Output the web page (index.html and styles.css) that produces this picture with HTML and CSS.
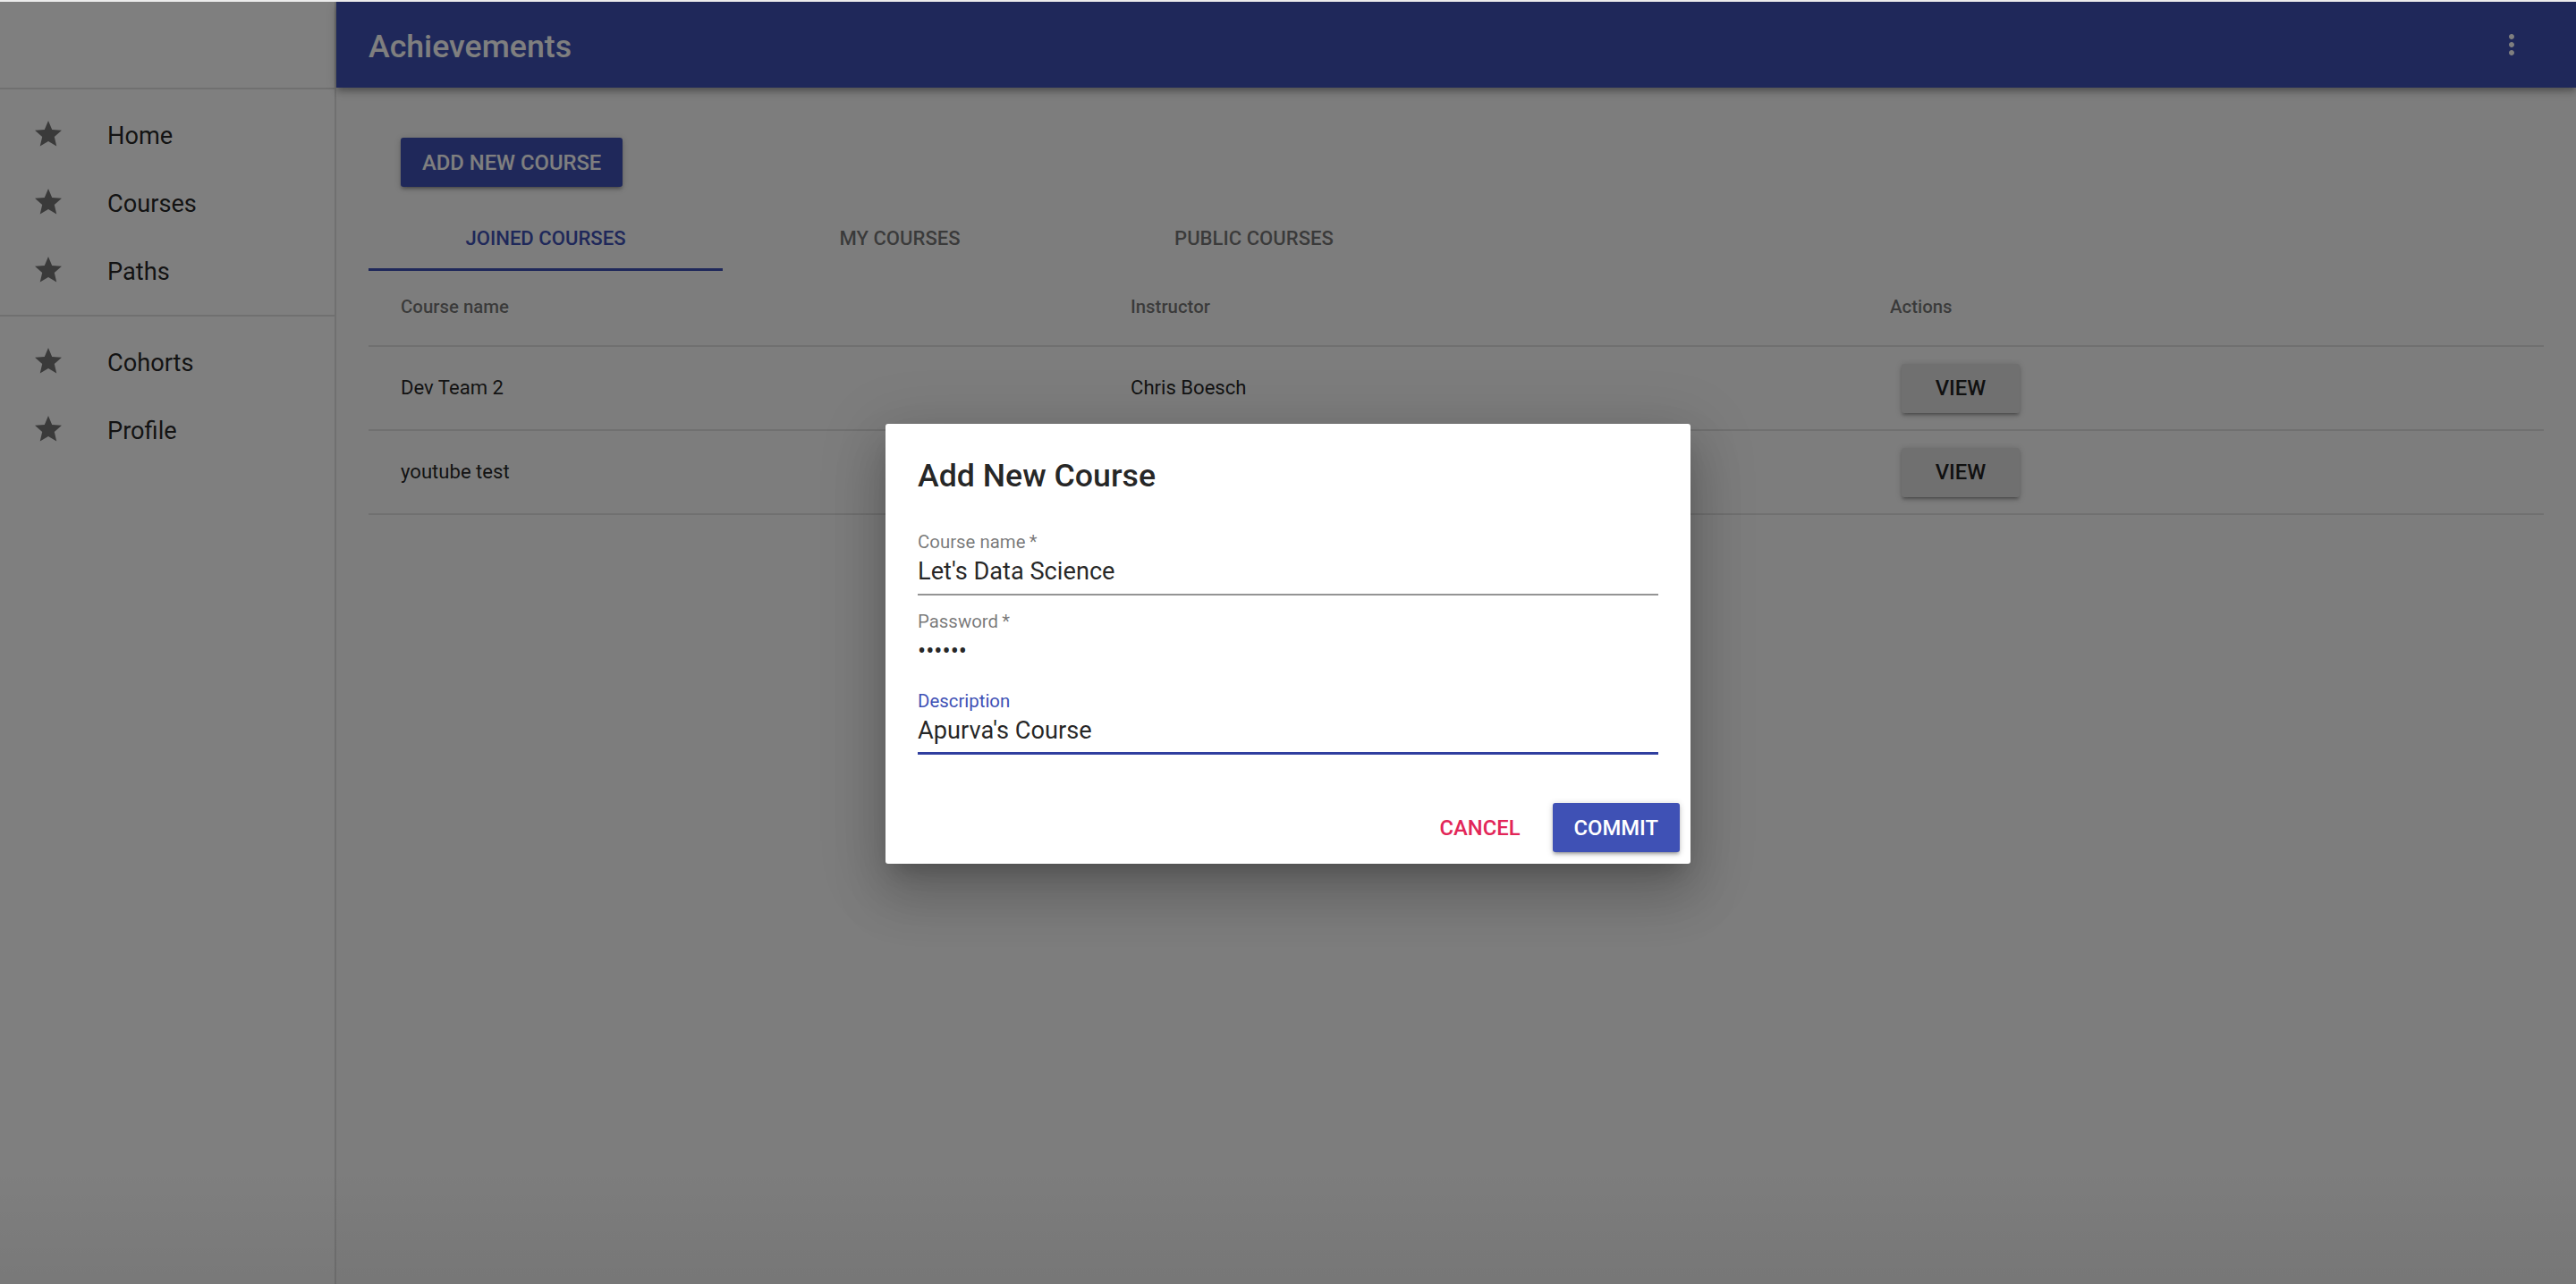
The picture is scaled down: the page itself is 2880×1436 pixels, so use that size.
FILE: index.html
```html
<!DOCTYPE html>
<html lang="en">
<head>
<meta charset="utf-8">
<title>Achievements</title>
<link rel="stylesheet" href="styles.css">
</head>
<body>
<div class="screen">
  <aside class="drawer">
    <div class="drawer-head"></div>
    <hr class="divider">
    <ul class="nav">
      <li class="nav-item"><svg class="nav-icon" viewBox="0 0 24 24"><path d="M12 17.27L18.18 21l-1.64-7.03L22 9.24l-7.19-.61L12 2 9.19 8.63 2 9.24l5.46 4.73L5.82 21z"/></svg><span class="nav-text">Home</span></li>
      <li class="nav-item"><svg class="nav-icon" viewBox="0 0 24 24"><path d="M12 17.27L18.18 21l-1.64-7.03L22 9.24l-7.19-.61L12 2 9.19 8.63 2 9.24l5.46 4.73L5.82 21z"/></svg><span class="nav-text">Courses</span></li>
      <li class="nav-item"><svg class="nav-icon" viewBox="0 0 24 24"><path d="M12 17.27L18.18 21l-1.64-7.03L22 9.24l-7.19-.61L12 2 9.19 8.63 2 9.24l5.46 4.73L5.82 21z"/></svg><span class="nav-text">Paths</span></li>
    </ul>
    <hr class="divider">
    <ul class="nav">
      <li class="nav-item"><svg class="nav-icon" viewBox="0 0 24 24"><path d="M12 17.27L18.18 21l-1.64-7.03L22 9.24l-7.19-.61L12 2 9.19 8.63 2 9.24l5.46 4.73L5.82 21z"/></svg><span class="nav-text">Cohorts</span></li>
      <li class="nav-item"><svg class="nav-icon" viewBox="0 0 24 24"><path d="M12 17.27L18.18 21l-1.64-7.03L22 9.24l-7.19-.61L12 2 9.19 8.63 2 9.24l5.46 4.73L5.82 21z"/></svg><span class="nav-text">Profile</span></li>
    </ul>
  </aside>

  <div class="main">
    <header class="appbar">
      <h1 class="appbar-title">Achievements</h1>
      <button class="icon-btn" aria-label="More options"><svg viewBox="0 0 24 24"><path d="M12 8c1.1 0 2-.9 2-2s-.9-2-2-2-2 .9-2 2 .9 2 2 2zm0 2c-1.1 0-2 .9-2 2s.9 2 2 2 2-.9 2-2-.9-2-2-2zm0 6c-1.1 0-2 .9-2 2s.9 2 2 2 2-.9 2-2-.9-2-2-2z"/></svg></button>
    </header>

    <main class="content">
      <div class="actions-bar">
        <button class="btn btn-contained btn-primary">ADD NEW COURSE</button>
      </div>

      <nav class="tabs">
        <button class="tab tab-active">JOINED COURSES</button>
        <button class="tab">MY COURSES</button>
        <button class="tab">PUBLIC COURSES</button>
      </nav>

      <table class="table">
        <thead>
          <tr>
            <th class="col-name">Course name</th>
            <th class="col-instructor">Instructor</th>
            <th>Actions</th>
          </tr>
        </thead>
        <tbody>
          <tr>
            <td>Dev Team 2</td>
            <td>Chris Boesch</td>
            <td class="cell-actions"><button class="btn btn-contained btn-default btn-view">VIEW</button></td>
          </tr>
          <tr>
            <td>youtube test</td>
            <td></td>
            <td class="cell-actions"><button class="btn btn-contained btn-default btn-view">VIEW</button></td>
          </tr>
        </tbody>
      </table>
    </main>
  </div>

  <div class="backdrop"></div>

  <div class="dialog-layer">
    <div class="dialog" role="dialog" aria-labelledby="dlg-title">
      <h2 class="dialog-title" id="dlg-title">Add New Course</h2>
      <div class="dialog-content">
        <div class="field">
          <label class="field-label" for="f-name">Course name&thinsp;*</label>
          <input class="field-input" id="f-name" type="text" value="Let's Data Science">
        </div>
        <div class="field field-plain">
          <label class="field-label" for="f-pass">Password&thinsp;*</label>
          <input class="field-input" id="f-pass" type="password" value="secret">
        </div>
        <div class="field field-focused">
          <label class="field-label" for="f-desc">Description</label>
          <input class="field-input" id="f-desc" type="text" value="Apurva's Course">
        </div>
      </div>
      <div class="dialog-actions">
        <button class="btn btn-text btn-secondary">CANCEL</button>
        <button class="btn btn-contained btn-primary">COMMIT</button>
      </div>
    </div>
  </div>
</div>
</body>
</html>
```

FILE: styles.css
```css
* {
  box-sizing: border-box;
}

html,
body {
  margin: 0;
}

body {
  background: #ececec;
  padding-top: 2px;
  font-family: Roboto, "Liberation Sans", Arial, sans-serif;
}

.screen {
  position: relative;
  display: flex;
  height: 1434px;
  overflow: hidden;
  background: #fafafa;
}

/* ---------- Drawer ---------- */
.drawer {
  width: 376px;
  flex: none;
  background: #fff;
  border-right: 2px solid rgba(0, 0, 0, 0.12);
}

.drawer-head {
  height: 96px;
}

.divider {
  margin: 0;
  border: 0;
  height: 2px;
  background: rgba(0, 0, 0, 0.12);
}

.nav {
  list-style: none;
  margin: 0;
  padding: 12px 0;
}

.nav-item {
  height: 76px;
  display: flex;
  align-items: center;
  padding: 0 36px;
}

.nav-icon {
  width: 36px;
  height: 36px;
  flex: none;
  fill: rgba(0, 0, 0, 0.54);
  margin-right: 24px;
}

.nav-text {
  padding: 3px 24px 0;
  font-size: 27.2px;
  line-height: 36px;
  color: rgba(0, 0, 0, 0.87);
}

/* ---------- Main ---------- */
.main {
  flex: 1;
  min-width: 0;
  display: flex;
  flex-direction: column;
}

.appbar {
  position: relative;
  z-index: 1;
  height: 96px;
  flex: none;
  display: flex;
  align-items: center;
  padding: 0 36px;
  background: #3f51b5;
  color: #fff;
  box-shadow: 0 3px 6px -1.5px rgba(0, 0, 0, 0.2),
    0 6px 7.5px 0 rgba(0, 0, 0, 0.14),
    0 1.5px 15px 0 rgba(0, 0, 0, 0.12);
}

.appbar-title {
  flex: 1;
  margin: 0;
  padding-top: 3px;
  font-size: 35.7px;
  font-weight: 500;
  line-height: 48px;
}

.icon-btn {
  width: 72px;
  height: 72px;
  padding: 18px;
  border: 0;
  background: none;
  display: flex;
}

.icon-btn svg {
  width: 36px;
  height: 36px;
  fill: #fff;
}

.content {
  flex: 1;
  padding: 0 36px;
}

.actions-bar {
  padding: 56px 36px 0;
}

/* ---------- Buttons ---------- */
.btn {
  height: 55px;
  min-width: 132px;
  padding: 0 24px;
  border: 0;
  border-radius: 3px;
  font-family: inherit;
  font-size: 23.8px;
  font-weight: 500;
  text-transform: uppercase;
  cursor: pointer;
}

.btn-contained {
  box-shadow: 0 1.5px 7.5px 0 rgba(0, 0, 0, 0.2),
    0 3px 3px 0 rgba(0, 0, 0, 0.14),
    0 4.5px 1.5px -3px rgba(0, 0, 0, 0.12);
}

.btn-primary {
  background: #3f51b5;
  color: #fff;
}

.btn-default {
  background: #e0e0e0;
  color: rgba(0, 0, 0, 0.87);
}

.btn-text {
  background: transparent;
}

.btn-secondary {
  color: #e22658;
}

.btn-view {
  margin-left: 13px;
}

/* ---------- Tabs ---------- */
.tabs {
  display: flex;
  margin-top: 22px;
  height: 72px;
}

.tab {
  width: 396px;
  height: 72px;
  padding: 0;
  border: 0;
  border-bottom: 3px solid transparent;
  background: none;
  font-family: inherit;
  font-size: 22.1px;
  font-weight: 500;
  text-transform: uppercase;
  color: rgba(0, 0, 0, 0.54);
}

.tab-active {
  color: #3f51b5;
  border-bottom-color: #3f51b5;
}

/* ---------- Table ---------- */
.table {
  width: 100%;
  border-collapse: separate;
  border-spacing: 0;
}

.table th,
.table td {
  box-sizing: content-box;
  text-align: left;
  vertical-align: middle;
  padding: 0 84px 3px 36px;
  border-bottom: 2px solid #e0e0e0;
}

.table th {
  height: 80px;
  font-size: 20.4px;
  font-weight: 500;
  color: rgba(0, 0, 0, 0.54);
}

.table td {
  height: 89px;
  font-size: 22.1px;
  color: rgba(0, 0, 0, 0.87);
}

.table td.cell-actions {
  height: 92px;
  padding-bottom: 0;
}

.col-name {
  width: 696px;
}

.col-instructor {
  width: 729px;
}

/* ---------- Modal ---------- */
.backdrop {
  position: absolute;
  inset: 0;
  z-index: 10;
  background: linear-gradient(to bottom, rgba(0, 0, 0, 0) calc(100% - 130px), rgba(0, 0, 0, 0.05) 100%),
    rgba(0, 0, 0, 0.5);
}

.dialog-layer {
  position: absolute;
  inset: 0;
  z-index: 11;
  display: flex;
  align-items: center;
  justify-content: center;
  padding-top: 2px;
}

.dialog {
  width: 900px;
  background: #fff;
  border-radius: 3px;
  box-shadow: 0 16.5px 22.5px -10.5px rgba(0, 0, 0, 0.2),
    0 36px 57px 4.5px rgba(0, 0, 0, 0.14),
    0 13.5px 69px 12px rgba(0, 0, 0, 0.12);
}

.dialog-title {
  margin: 0;
  padding: 34px 36px 21px;
  font-size: 35.7px;
  font-weight: 500;
  line-height: 48px;
  color: rgba(0, 0, 0, 0.87);
}

.dialog-content {
  padding: 0 36px 42px;
}

.field {
  margin-top: 17px;
  height: 72px;
  display: flex;
  flex-direction: column;
  border-bottom: 2px solid rgba(0, 0, 0, 0.42);
}

.field-label {
  height: 24px;
  font-size: 20.4px;
  line-height: 24px;
  color: rgba(0, 0, 0, 0.54);
}

.field-input {
  display: block;
  width: 100%;
  height: 36px;
  margin-top: 3px;
  padding: 0;
  border: 0;
  outline: none;
  background: transparent;
  font-family: inherit;
  font-size: 27.2px;
  line-height: 36px;
  color: rgba(0, 0, 0, 0.87);
}

.field-plain {
  border-bottom-color: transparent;
}

.field-focused {
  border-bottom: 3px solid #303f9f;
}

.field-focused .field-label {
  color: #3f51b5;
}

.dialog-actions {
  display: flex;
  justify-content: flex-end;
  gap: 12px;
  padding: 12px 12px 13px;
}
```
